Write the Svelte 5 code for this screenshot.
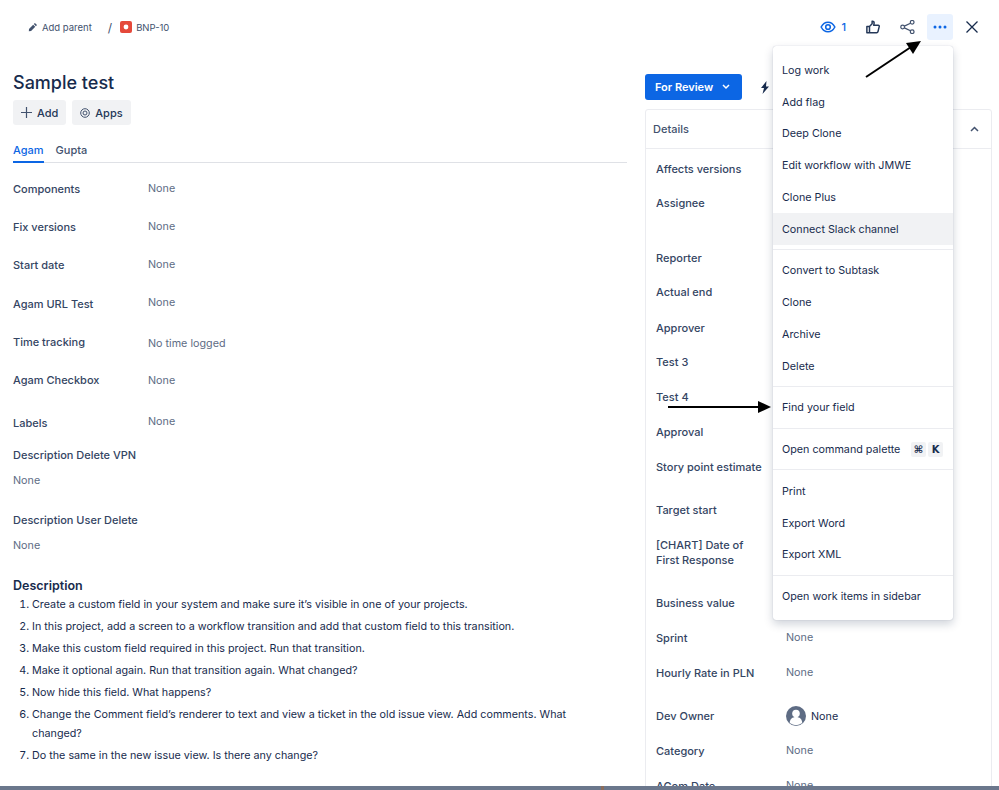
<script>
    const leftFields = [
        { label: "Components", value: "None", cls: "r1" },
        { label: "Fix versions", value: "None", cls: "r1" },
        { label: "Start date", value: "None", cls: "r1" },
        { label: "Agam URL Test", value: "None", cls: "r1" },
        { label: "Time tracking", value: "No time logged", cls: "r2" },
        { label: "Agam Checkbox", value: "None", cls: "r3" },
        { label: "Labels", value: "None", cls: "r4" }
    ];
    const steps = [
        "Create a custom field in your system and make sure it’s visible in one of your projects.",
        "In this project, add a screen to a workflow transition and add that custom field to this transition.",
        "Make this custom field required in this project. Run that transition.",
        "Make it optional again. Run that transition again. What changed?",
        "Now hide this field. What happens?",
        "Change the Comment field’s renderer to text and view a ticket in the old issue view. Add comments. What changed?",
        "Do the same in the new issue view. Is there any change?"
    ];
    const details = [
        { label: "Affects versions", h: 34 },
        { label: "Assignee", h: 55 },
        { label: "Reporter", h: 34 },
        { label: "Actual end", h: 36 },
        { label: "Approver", h: 34 },
        { label: "Test 3", h: 35 },
        { label: "Test 4", h: 35 },
        { label: "Approval", h: 35 },
        { label: "Story point estimate", h: 43 },
        { label: "Target start", h: 35 },
        { label: "[CHART] Date of First Response", h: 58 },
        { label: "Business value", h: 35 },
        { label: "Sprint", h: 35, value: "None" },
        { label: "Hourly Rate in PLN", h: 43, value: "None" },
        { label: "Dev Owner", h: 35, value: "None", avatar: true },
        { label: "Category", h: 35, value: "None" },
        { label: "AGom Date", h: 35, value: "None" }
    ];
    const menuGroups = [
        ["Log work", "Add flag", "Deep Clone", "Edit workflow with JMWE", "Clone Plus", "Connect Slack channel"],
        ["Convert to Subtask", "Clone", "Archive", "Delete"],
        ["Find your field"],
        ["Open command palette"],
        ["Print", "Export Word", "Export XML"],
        ["Open work items in sidebar"]
    ];
</script>

<div class="page">
    <header class="top">
        <div class="crumbs">
            <svg class="pencil" width="10" height="10" viewBox="0 0 12 12"><path d="M8.300 1.200l2.500 2.500-1.300 1.300L7 2.500zM6.200 3.300l2.500 2.500-5 5L1 11l.2-2.700z" fill="#42526e"/></svg>
            <span>Add parent</span>
            <span class="slash">/</span>
            <svg class="bug" width="12" height="12" viewBox="0 0 12 12"><rect width="12" height="12" rx="2" fill="#e5493a"/><circle cx="6" cy="6" r="2.400" fill="#fff"/></svg>
            <span>BNP-10</span>
        </div>
        <div class="actions">
            <div class="watch">
                <svg width="16" height="12" viewBox="0 0 18 14" fill="none" stroke="#0c66e4" stroke-width="1.800"><path d="M1 7c2-3.800 4.800-5.600 8-5.600S15 3.200 17 7c-2 3.800-4.800 5.600-8 5.600S3 10.800 1 7z"/><circle cx="9" cy="7" r="2.700"/></svg>
                <span>1</span>
            </div>
            <svg class="thumb" width="14" height="14" viewBox="0 0 16 16" fill="none" stroke="#253858" stroke-width="1.700" stroke-linejoin="round"><path d="M1 7.500h3v7H1zM4 7.500l3-3.200V1.500c1.400-.4 2.300.6 2.300 2L8.800 6H14c.9 0 1.300.8 1.100 1.500l-1.400 5.800c-.2.800-.7 1.200-1.500 1.200H4"/></svg>
            <svg class="share" width="15" height="14" viewBox="0 0 16 15" fill="none" stroke="#42526e" stroke-width="1.300"><circle cx="2.800" cy="7.500" r="2"/><circle cx="13" cy="2.500" r="2"/><circle cx="13" cy="12.500" r="2"/><path d="M4.600 6.600l6.600-3.200M4.600 8.400l6.600 3.200"/></svg>
            <div class="more">
                <svg width="14" height="4" viewBox="0 0 14 4" fill="#0c66e4"><circle cx="2" cy="2" r="1.500"/><circle cx="7" cy="2" r="1.500"/><circle cx="12" cy="2" r="1.500"/></svg>
            </div>
            <svg class="close" width="12" height="12" viewBox="0 0 12 12" stroke="#172b4d" stroke-width="1.300"><path d="M.5.500l11 11M11.500.500l-11 11"/></svg>
        </div>
    </header>

    <div class="body">
        <main class="left">
            <h1>Sample test</h1>
            <div class="buttons">
                <button class="btn">
                    <svg width="11" height="11" viewBox="0 0 11 11" stroke="#42526e" stroke-width="1.200"><path d="M5.500 0v11M0 5.500h11"/></svg>
                    Add
                </button>
                <button class="btn">
                    <svg width="10" height="10" viewBox="0 0 10 10" fill="none" stroke="#42526e" stroke-width="1"><circle cx="5" cy="5" r="4.300"/><circle cx="5" cy="5" r="2"/></svg>
                    Apps
                </button>
            </div>
            <div class="tabs">
                <span class="tab active">Agam</span>
                <span class="tab">Gupta</span>
            </div>

            {#each leftFields as f}
                <div class="field {f.cls}">
                    <span class="label">{f.label}</span>
                    <span class="value">{f.value}</span>
                </div>
            {/each}

            <div class="stack first"><span class="label">Description Delete VPN</span><span class="value">None</span></div>
            <div class="stack"><span class="label">Description User Delete</span><span class="value">None</span></div>

            <h2>Description</h2>
            <ol>
                {#each steps as s}
                    <li>{s}</li>
                {/each}
            </ol>
        </main>

        <aside class="right">
            <div class="status-row">
                <button class="status">For Review
                    <svg width="8" height="6" viewBox="0 0 8 6" fill="none" stroke="#fff" stroke-width="1.500"><path d="M1 1l3 3 3-3"/></svg>
                </button>
                <svg class="bolt" width="10" height="13" viewBox="0 0 10 13" fill="#172b4d"><path d="M6.500 0L1 7h3L2.500 13 9 5.600H6z"/></svg>
            </div>
            <section class="panel">
                <div class="panel-head">
                    <span>Details</span>
                    <svg width="9" height="6" viewBox="0 0 9 6" fill="none" stroke="#42526e" stroke-width="1.500"><path d="M1 5l3.500-3.500L8 5"/></svg>
                </div>
                <div class="rows">
                    {#each details as d}
                        <div class="drow" style="height: {d.h}px">
                            <span class="dlabel">{d.label}</span>
                            {#if d.avatar}
                                <span class="owner">
                                    <svg width="20" height="20" viewBox="0 0 20 20"><circle cx="10" cy="10" r="10" fill="#5e6c84"/><circle cx="10" cy="7.500" r="3.800" fill="#fff"/><path d="M3.800 17c0-4 2.600-6 6.200-6s6.200 2 6.200 6a10 10 0 0 1-12.400 0z" fill="#fff"/></svg>
                                    None
                                </span>
                            {:else if d.value}
                                <span class="value dvalue">{d.value}</span>
                            {/if}
                        </div>
                    {/each}
                </div>
            </section>
        </aside>
    </div>

    <nav class="menu">
        {#each menuGroups as group}
            <div class="group">
                {#each group as item}
                    <div class="item" class:hover={item === "Connect Slack channel"}>
                        <span>{item}</span>
                        {#if item === "Open command palette"}
                            <span class="keys"><kbd>⌘</kbd><kbd>K</kbd></span>
                        {/if}
                    </div>
                {/each}
            </div>
        {/each}
    </nav>

    <svg class="arrow a1" width="60" height="42" viewBox="0 0 60 42"><path d="M1 37L46 7" stroke="#000" stroke-width="2"/><path d="M56 1L41 3l7 11z" fill="#000"/></svg>
    <svg class="arrow a2" width="104" height="14" viewBox="0 0 104 14"><path d="M0 7h92" stroke="#000" stroke-width="2"/><path d="M103 7L90 1v12z" fill="#000"/></svg>

    <div class="bottom"><span class="tick"></span></div>
</div>

<style>
    :global(body) {
        margin: 0;
        background: #fff;
    }

    .page {
        position: relative;
        width: 999px;
        height: 790px;
        overflow: hidden;
        font-family: Inter, "Liberation Sans", sans-serif;
        font-size: 10.750px;
        color: #172b4d;
    }

    .top {
        display: flex;
        justify-content: space-between;
        align-items: center;
        height: 54px;
        padding: 0 21px 0 28px;
    }

    .crumbs {
        display: flex;
        align-items: center;
        color: #42526e;
        font-size: 9.500px;
    }

    .pencil {
        margin-right: 4px;
    }

    .slash {
        margin: 0 8px 0 16px;
        font-size: 12px;
    }

    .bug {
        margin-right: 4px;
    }

    .actions {
        display: flex;
        align-items: center;
    }

    .watch {
        display: flex;
        align-items: center;
        gap: 5px;
        color: #0c66e4;
        font-size: 11px;
        font-weight: 500;
    }

    .thumb {
        margin-left: 20px;
    }

    .share {
        margin-left: 20px;
    }

    .more {
        display: flex;
        align-items: center;
        justify-content: center;
        width: 26px;
        height: 26px;
        margin-left: 12px;
        border-radius: 3px;
        background: #e9f2ff;
    }

    .close {
        margin-left: 13px;
    }

    .body {
        display: flex;
    }

    .left {
        flex: none;
        width: 614px;
        padding-left: 13px;
    }

    h1 {
        margin: 18px 0 6px;
        font-size: 18px;
        line-height: 22px;
        font-weight: 500;
    }

    .buttons {
        display: flex;
        gap: 6px;
    }

    .btn {
        display: flex;
        align-items: center;
        gap: 5px;
        height: 25px;
        padding: 0 8px;
        border: 0;
        border-radius: 3px;
        background: #f1f2f4;
        color: #253858;
        font: 500 11px Inter, "Liberation Sans", sans-serif;
    }

    .tabs {
        display: flex;
        gap: 12px;
        height: 25px;
        margin: 13px 0 7px;
        border-bottom: 1px solid #dfe1e6;
        box-sizing: border-box;
        font-size: 11px;
    }

    .tab {
        height: 25px;
        box-sizing: border-box;
        padding-top: 5px;
        color: #42526e;
        font-weight: 500;
    }

    .tab.active {
        color: #0c66e4;
        border-bottom: 2px solid #0c66e4;
    }

    .label {
        color: #344563;
        font-size: 11px;
        font-weight: 500;
    }

    .value {
        color: #5e6c84;
    }

    .field {
        display: grid;
        grid-template-columns: 135px 1fr;
        align-items: center;
        height: 38px;
    }

    .field .value {
        padding-bottom: 2px;
    }

    .r1 {
        height: 38.200px;
    }

    .field.r2 .value {
        padding-top: 6px;
    }

    .field.r3 .value {
        padding-top: 4px;
    }

    .r4 {
        margin-top: 5px;
    }

    .stack {
        display: flex;
        flex-direction: column;
        gap: 12px;
        margin-top: 25px;
        line-height: 14px;
    }

    .stack.first {
        margin-top: 6px;
    }

    h2 {
        margin: 24px 0 0;
        font-size: 12.500px;
        line-height: 18px;
        font-weight: 600;
    }

    ol {
        margin: 0;
        padding: 0 12px 0 19px;
        line-height: 19px;
    }

    li {
        margin-bottom: 3px;
    }

    .right {
        flex: none;
        width: 354px;
        margin-left: 18px;
    }

    .status-row {
        display: flex;
        align-items: center;
        gap: 18px;
        margin-top: 20px;
    }

    .status {
        display: flex;
        align-items: center;
        gap: 9px;
        height: 26px;
        padding: 0 12px 0 10px;
        border: 0;
        border-radius: 3px;
        background: #0c66e4;
        color: #fff;
        font: 600 11px Inter, "Liberation Sans", sans-serif;
    }

    .panel {
        margin-top: 9px;
        width: 345px;
        border: 1px solid #ebecf0;
        border-radius: 3px;
    }

    .panel-head {
        display: flex;
        justify-content: space-between;
        align-items: center;
        height: 38px;
        padding: 0 12px 0 7px;
        border-bottom: 1px solid #ebecf0;
        color: #42526e;
        font-size: 11px;
        font-weight: 500;
    }

    .rows {
        padding: 5px 10px 0;
    }

    .drow {
        display: grid;
        grid-template-columns: 130px 1fr;
        align-items: start;
        padding-top: 8px;
        box-sizing: border-box;
    }

    .dlabel {
        color: #344563;
        font-size: 11px;
        font-weight: 500;
        line-height: 15px;
        max-width: 110px;
    }

    .dvalue {
        line-height: 13px;
    }

    .owner {
        display: flex;
        align-items: center;
        gap: 5px;
        color: #172b4d;
        margin-top: -3px;
    }

    .menu {
        position: absolute;
        left: 773px;
        top: 46px;
        width: 180px;
        padding: 8.400px 0 8px;
        background: #fff;
        border-radius: 3px;
        box-shadow: 0 4px 10px rgba(9, 30, 66, 0.2), 0 0 1px rgba(9, 30, 66, 0.3);
    }

    .group + .group {
        margin-top: 4px;
        padding-top: 4.800px;
        border-top: 1px solid #ebecf0;
    }

    .group:nth-child(2) {
        margin-top: 4.400px;
    }

    .group:nth-child(5) {
        padding-top: 5.400px;
    }

    .item {
        display: flex;
        align-items: center;
        justify-content: space-between;
        height: 31.750px;
        padding: 0 10px 0 9px;
        color: #172b4d;
    }

    .item.hover {
        background: #f1f2f4;
    }

    .keys {
        display: flex;
        gap: 2px;
    }

    kbd {
        display: flex;
        align-items: center;
        justify-content: center;
        width: 15px;
        height: 15px;
        border-radius: 2px;
        background: #f1f2f4;
        font: 600 10px "DejaVu Sans", Inter, sans-serif;
    }

    .arrow {
        position: absolute;
    }

    .a1 {
        left: 865px;
        top: 40px;
    }

    .a2 {
        left: 668px;
        top: 400px;
    }

    .bottom {
        position: absolute;
        left: 0;
        right: 0;
        bottom: 0;
        height: 4px;
        background: #6b778c;
    }

    .tick {
        position: absolute;
        left: 601px;
        top: 0;
        width: 3px;
        height: 4px;
        background: #8a6d5c;
    }
</style>
